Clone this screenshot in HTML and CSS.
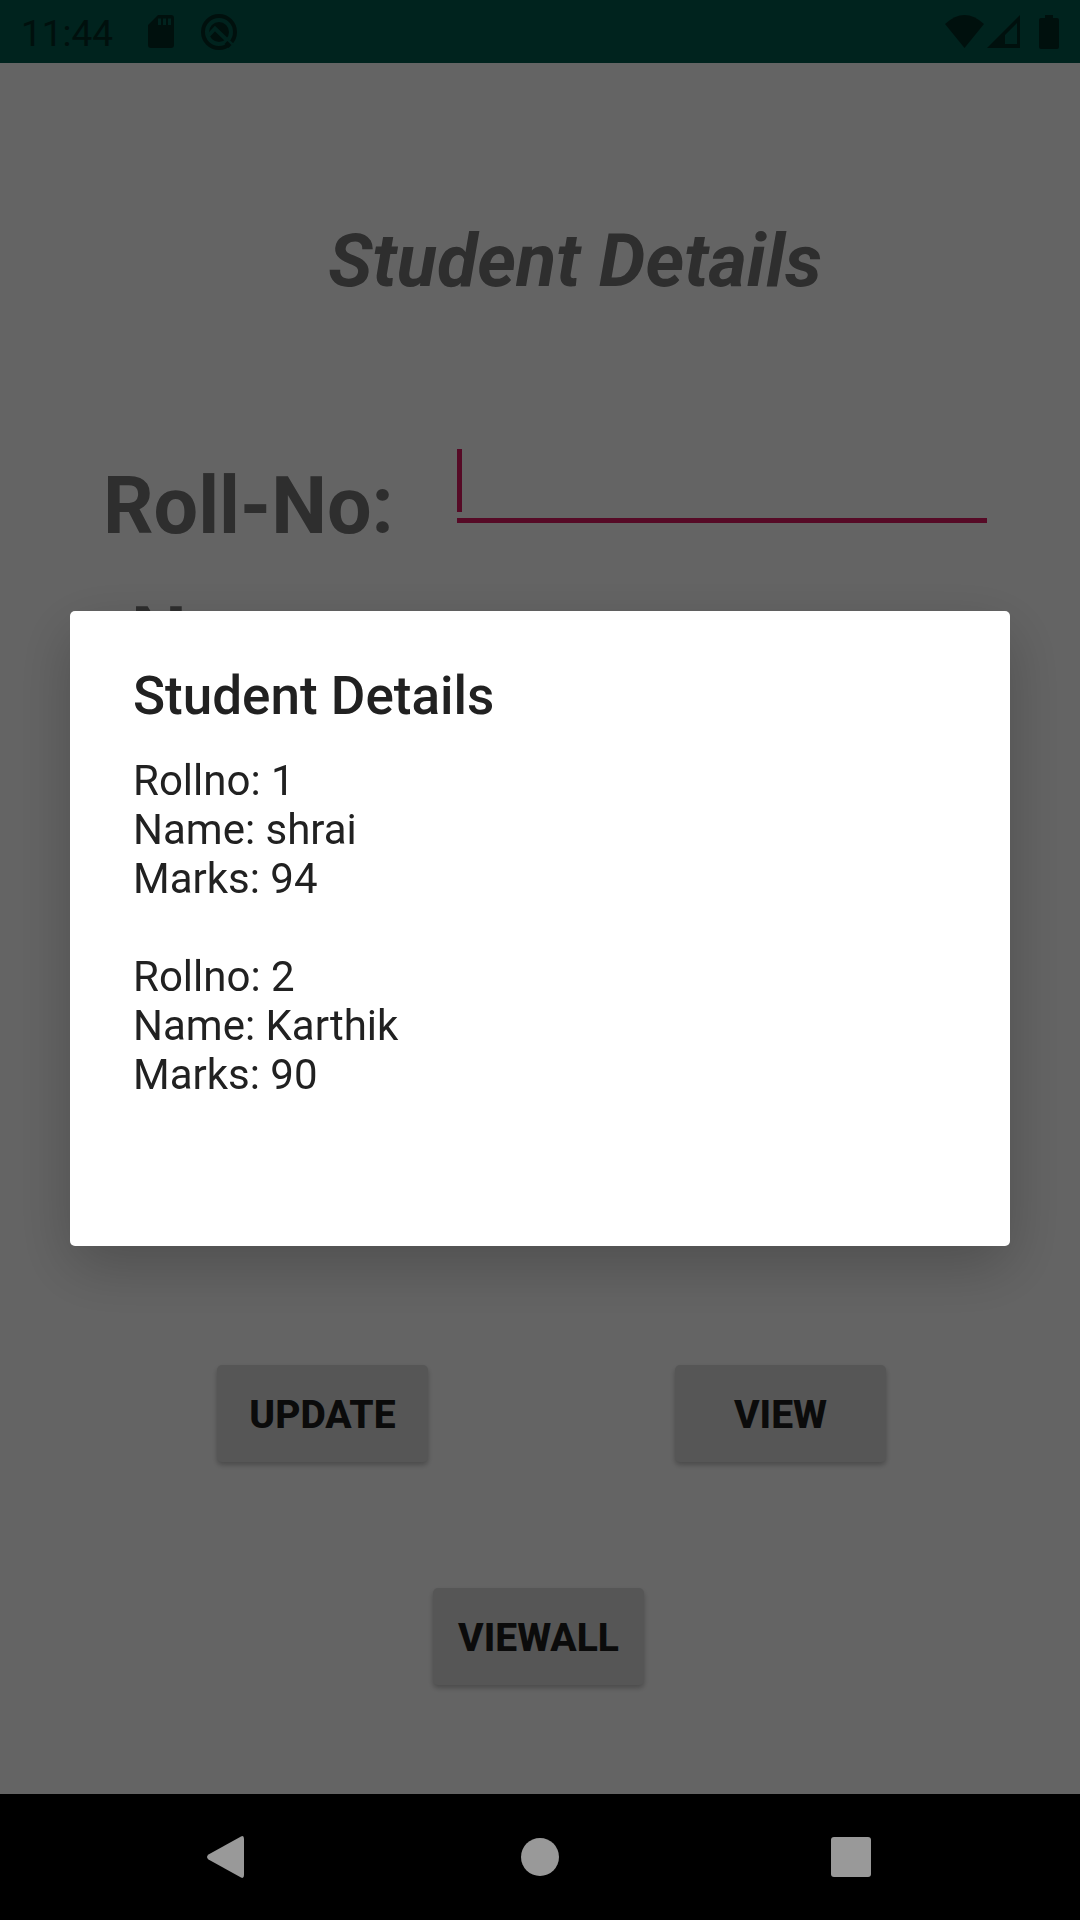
FILE: index.html
```html
<!DOCTYPE html>
<html lang="en">
<head>
<meta charset="utf-8">
<meta name="viewport" content="width=device-width, initial-scale=1">
<title>Student Details</title>
<link rel="stylesheet" href="styles.css">
</head>
<body>
<div class="screen">
  <header class="status">
    <span class="clock">11:44</span>
    <svg class="icon-card" width="26" height="33" viewBox="0 0 26 33" aria-hidden="true"><path fill-rule="evenodd" d="M10 0H23a3 3 0 0 1 3 3V30a3 3 0 0 1-3 3H3a3 3 0 0 1-3-3V10ZM10 3.500V10h3V3.500ZM15 3.500V10h3V3.500ZM20 3.500V10h3V3.500Z"/></svg>
    <svg class="icon-q" width="36" height="36" viewBox="0 0 36 36" aria-hidden="true"><circle class="ring" cx="18" cy="18" r="16"/><circle cx="18" cy="18" r="10"/><path class="cut" d="M7 22 14 14.500 31 31"/><path class="tail" d="M25 28.500 29 32.500"/></svg>
    <span class="spacer"></span>
    <svg width="39" height="33" viewBox="0 0 39 33" aria-hidden="true"><path d="M0 9Q19.500-9 39 9L19.500 33Z"/></svg>
    <svg class="icon-signal" width="33" height="33" viewBox="0 0 33 33" aria-hidden="true"><path fill-rule="evenodd" d="M33 0V33H0ZM30 8 18 20V29H30Z"/></svg>
    <svg class="icon-battery" width="20" height="34" viewBox="0 0 20 34" aria-hidden="true"><path d="M6 0h8v3h4a2 2 0 0 1 2 2V32a2 2 0 0 1-2 2H2a2 2 0 0 1-2-2V5a2 2 0 0 1 2-2H6Z"/></svg>
  </header>
  <main class="form">
    <h1 class="heading">Student Details</h1>
    <div class="row">
      <label class="label" for="roll">Roll-No:</label>
      <input class="field" id="roll" type="text">
    </div>
    <div class="row row-name">
      <span class="label">Name:</span>
    </div>
    <div class="actions">
      <div class="pair">
        <button class="btn" type="button">UPDATE</button>
        <button class="btn" type="button">VIEW</button>
      </div>
      <div class="single">
        <button class="btn" type="button">VIEWALL</button>
      </div>
    </div>
  </main>
  <nav class="nav">
    <button class="nav-btn" type="button" aria-label="Back"><svg width="44" height="42" viewBox="0 0 44 42"><path d="M34 .5Q37 -1 37 3V39Q37 43 34 41.500L1.500 23.500Q-1.500 21 1.500 18.500Z"/></svg></button>
    <button class="nav-btn" type="button" aria-label="Home"><svg width="38" height="38" viewBox="0 0 38 38"><circle cx="19" cy="19" r="19"/></svg></button>
    <button class="nav-btn" type="button" aria-label="Recent apps"><svg width="40" height="40" viewBox="0 0 40 40"><rect width="40" height="40" rx="3"/></svg></button>
  </nav>
</div>
<div class="scrim">
  <section class="dialog" role="dialog" aria-labelledby="dialog-title">
    <h2 class="dialog-title" id="dialog-title">Student Details</h2>
    <p class="record">Rollno: 1<br>Name: shrai<br>Marks: 94</p>
    <p class="record">Rollno: 2<br>Name: Karthik<br>Marks: 90</p>
  </section>
</div>
</body>
</html>
```
FILE: styles.css
```css
* { box-sizing: border-box; margin: 0; }
body { background: #fafafa; font-family: Roboto, "Liberation Sans", sans-serif; }
svg { display: block; flex: none; }
button { border: 0; padding: 0; font-family: inherit; }

.screen { display: flex; flex-direction: column; min-height: 100vh; }

.status {
  display: flex;
  align-items: center;
  height: 63px;
  padding: 0 21px;
  background: #00574b;
  color: #002822;
  fill: #002822;
}
.clock { font-size: 37px; line-height: 43px; padding-top: 3px; }
.icon-card { margin-left: 35px; }
.icon-q { margin-left: 27px; }
.ring { fill: none; stroke: #002822; stroke-width: 4; }
.cut { fill: none; stroke: #00574b; stroke-width: 4; }
.tail { stroke: #002822; stroke-width: 4; }
.spacer { flex: 1; }
.icon-signal { margin-left: 3px; }
.icon-battery { margin-left: 19px; }

.form { flex: 1; display: flex; flex-direction: column; padding: 155px 0 109px; }
.heading {
  padding-left: 70px;
  color: #737373;
  font-size: 74px;
  line-height: 86px;
  font-style: italic;
  text-align: center;
}
.row {
  display: grid;
  grid-template-columns: 354px 1fr;
  align-items: start;
  margin-top: 145px;
  padding: 0 93px 0 103px;
}
.row-name { margin-top: 27px; padding-left: 131px; }
.label {
  padding-top: 11px;
  color: #737373;
  font-size: 79px;
  line-height: 92px;
  font-weight: 700;
}
/* Focused field: accent underline and a thick accent caret */
.field {
  width: 100%;
  height: 74px;
  padding: 0 8px 6px;
  border: 0;
  border-bottom: 5px solid #d81b60;
  border-radius: 0;
  outline: 0;
  background: linear-gradient(#d81b60, #d81b60) 0 0 / 5px 63px no-repeat;
  font: 47px/55px Roboto, sans-serif;
}
.actions { margin-top: auto; }
.pair { display: flex; justify-content: space-between; padding: 0 194px 0 217px; }
.single { display: flex; justify-content: center; padding: 126px 3px 0 0; }
.btn {
  width: 211px;
  height: 97px;
  padding-top: 2px;
  border-radius: 5px;
  background: #d6d7d7;
  color: #1c1c1c;
  box-shadow: 0 3px 5px rgba(0, 0, 0, .25);
  font-size: 39px;
  font-weight: 800;
}

.nav {
  position: relative;
  z-index: 2;
  display: flex;
  height: 126px;
  padding: 0 73px;
  background: #000;
}
.nav-btn { flex: 1; display: flex; align-items: center; justify-content: center; background: none; fill: #999; }

.scrim {
  position: fixed;
  inset: 0;
  z-index: 1;
  display: flex;
  align-items: center;
  padding: 63px 70px 126px;
  background: rgba(0, 0, 0, .6);
}
.dialog {
  flex: 1;
  padding: 54px 63px 98px;
  border-radius: 5px;
  background: #fff;
  box-shadow: 0 20px 60px rgba(0, 0, 0, .22);
  color: #212121;
}
.dialog-title { margin-bottom: 29px; font-size: 53px; line-height: 62px; font-weight: 500; }
.record { margin-bottom: 49px; font-size: 42px; line-height: 49px; }
```
